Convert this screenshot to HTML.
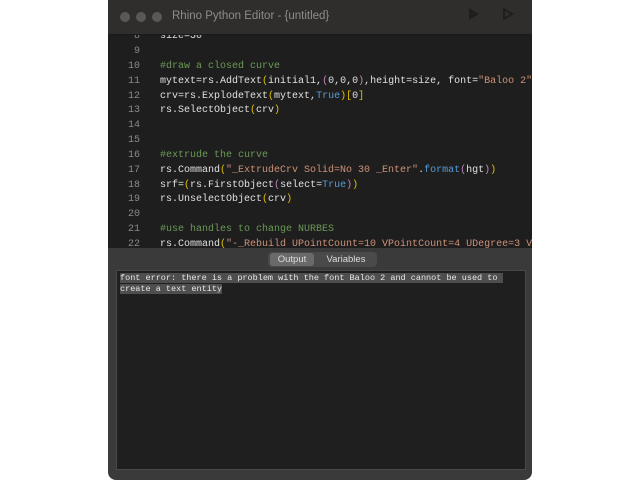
<!DOCTYPE html>
<html><head><style>
body{margin:0;width:640px;height:480px;background:#fff;position:relative;overflow:hidden;font-family:"Liberation Sans",sans-serif}
.win{position:absolute;left:108px;top:0;width:424px;height:480px;background:#3a3a3a;border-radius:0 0 8px 8px;overflow:hidden}
.title{position:absolute;left:0;top:0;width:424px;height:34px;background:#302e2d;border-bottom:1px solid #1a1a1a;z-index:2}
.dot{position:absolute;top:12px;width:10px;height:10px;border-radius:50%;background:#5a5857}
.ttl{position:absolute;left:64px;top:10px;color:#8e8c8a;font-size:11.5px}
.ed{position:absolute;left:0;top:35px;width:424px;height:213px;background:#1e1e1e;overflow:hidden}
.ln{position:absolute;left:0;width:424px;height:15px;line-height:15px;font-family:"Liberation Mono",monospace;font-size:10px;color:#e0e0e0;white-space:pre}
.ln b{font-weight:normal;position:absolute;right:392px;color:#8a8a8a}
.ln span.c{position:absolute;left:52px}
.cm{color:#6a9955}.y{color:#e5c000}.p{color:#c586c0}.s{color:#ce9178}.k{color:#569cd6}.n{color:#b5cea8}
.tabs{position:absolute;left:160px;top:252px;width:109px;height:15px;background:#4a4a4a;border-radius:4px;font-size:9.5px;color:#ddd}
.tabs div{position:absolute;top:0;height:15px;line-height:15px;text-align:center}
.out{position:absolute;left:8px;top:270px;width:408px;height:198px;background:#1f1f1f;border:1px solid #484848}
.msg{position:absolute;left:3px;top:2px;font-family:"Liberation Mono",monospace;font-size:8.5px;line-height:10.5px;color:#e8e8e8;white-space:pre}
.msg span{background:#4e4e4e}
</style></head><body>
<div class="win">
 <div class="title">
  <div class="dot" style="left:12px"></div><div class="dot" style="left:28px"></div><div class="dot" style="left:44px"></div>
  <div class="ttl">Rhino Python Editor - {untitled}</div>
  <svg style="position:absolute;left:360px;top:7px" width="12" height="14"><path d="M1 1 L11 7 L1 13Z" fill="#1f1e1d"/></svg>
  <svg style="position:absolute;left:394px;top:7px" width="12" height="14"><path d="M2 2 L10 7 L2 12Z" fill="none" stroke="#1f1e1d" stroke-width="2"/></svg>
 </div>
 <div class="ed">
  <div class="ln" style="top:-6px"><b>8</b><span class="c">size=30</span></div>
  <div class="ln" style="top:9px"><b>9</b></div>
  <div class="ln" style="top:24px"><b>10</b><span class="c cm">#draw a closed curve</span></div>
  <div class="ln" style="top:39px"><b>11</b><span class="c">mytext=rs.AddText<span class="y">(</span>initial1,<span class="p">(</span>0,0,0<span class="p">)</span>,height=size, font=<span class="s">"Baloo 2"</span><span class="y">)</span></span></div>
  <div class="ln" style="top:54px"><b>12</b><span class="c">crv=rs.ExplodeText<span class="y">(</span>mytext,<span class="k">True</span><span class="y">)[</span>0<span class="y">]</span></span></div>
  <div class="ln" style="top:68px"><b>13</b><span class="c">rs.SelectObject<span class="y">(</span>crv<span class="y">)</span></span></div>
  <div class="ln" style="top:83px"><b>14</b></div>
  <div class="ln" style="top:98px"><b>15</b></div>
  <div class="ln" style="top:113px"><b>16</b><span class="c cm">#extrude the curve</span></div>
  <div class="ln" style="top:128px"><b>17</b><span class="c">rs.Command<span class="y">(</span><span class="s">"_ExtrudeCrv Solid=No 30 _Enter"</span>.<span class="k">format</span><span class="p">(</span>hgt<span class="p">)</span><span class="y">)</span></span></div>
  <div class="ln" style="top:143px"><b>18</b><span class="c">srf=<span class="y">(</span>rs.FirstObject<span class="p">(</span>select=<span class="k">True</span><span class="p">)</span><span class="y">)</span></span></div>
  <div class="ln" style="top:157px"><b>19</b><span class="c">rs.UnselectObject<span class="y">(</span>crv<span class="y">)</span></span></div>
  <div class="ln" style="top:172px"><b>20</b></div>
  <div class="ln" style="top:187px"><b>21</b><span class="c cm">#use handles to change NURBES</span></div>
  <div class="ln" style="top:202px"><b>22</b><span class="c">rs.Command<span class="y">(</span><span class="s">"-_Rebuild UPointCount=10 VPointCount=4 UDegree=3 VD</span></span></div>
 </div>
 <div class="tabs"><div style="left:2px;width:44px;top:1px;height:13px;line-height:13px;background:#6a6a6a;border-radius:3px">Output</div><div style="left:50px;width:56px">Variables</div></div>
 <div class="out"><div class="msg"><span>font error: there is a problem with the font Baloo 2 and cannot be used to </span>
<span>create a text entity</span></div></div>
</div>
</body></html>
